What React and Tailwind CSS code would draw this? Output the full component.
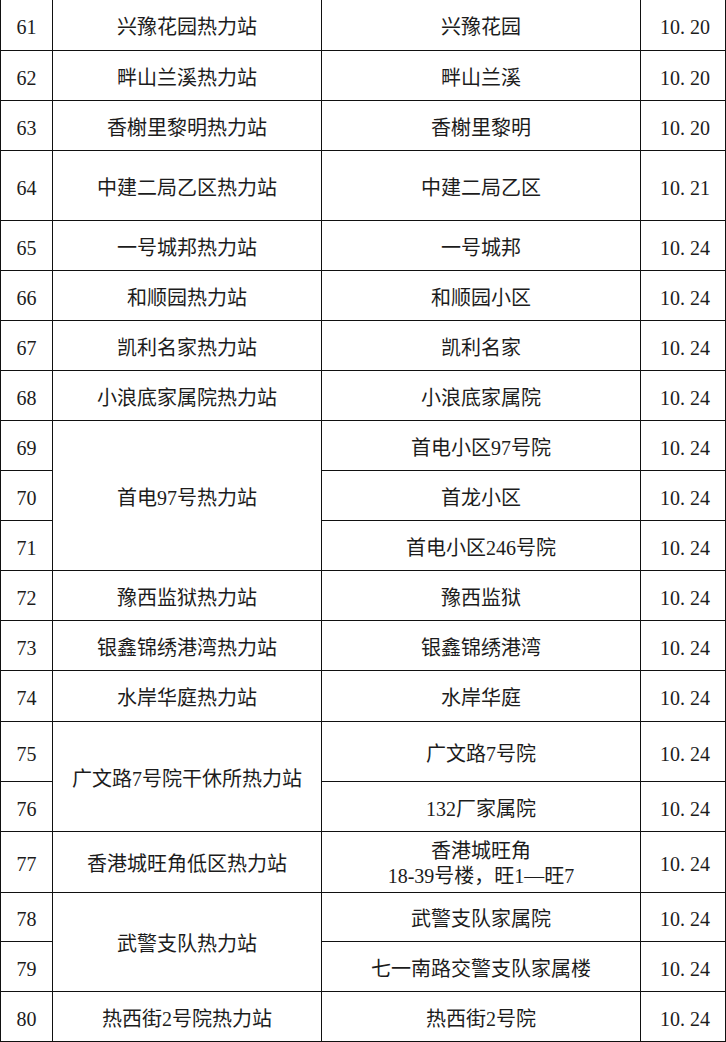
import React from 'react';

// heating stations list, rows 61-80
const rows = [
  { no: 61, station: '兴豫花园热力站', area: '兴豫花园', date: ['10', '20'] },
  { no: 62, station: '畔山兰溪热力站', area: '畔山兰溪', date: ['10', '20'] },
  { no: 63, station: '香榭里黎明热力站', area: '香榭里黎明', date: ['10', '20'] },
  { no: 64, station: '中建二局乙区热力站', area: '中建二局乙区', date: ['10', '21'] },
  { no: 65, station: '一号城邦热力站', area: '一号城邦', date: ['10', '24'] },
  { no: 66, station: '和顺园热力站', area: '和顺园小区', date: ['10', '24'] },
  { no: 67, station: '凯利名家热力站', area: '凯利名家', date: ['10', '24'] },
  { no: 68, station: '小浪底家属院热力站', area: '小浪底家属院', date: ['10', '24'] },
  { no: 69, station: '首电97号热力站', span: 3, area: '首电小区97号院', date: ['10', '24'] },
  { no: 70, area: '首龙小区', date: ['10', '24'] },
  { no: 71, area: '首电小区246号院', date: ['10', '24'] },
  { no: 72, station: '豫西监狱热力站', area: '豫西监狱', date: ['10', '24'] },
  { no: 73, station: '银鑫锦绣港湾热力站', area: '银鑫锦绣港湾', date: ['10', '24'] },
  { no: 74, station: '水岸华庭热力站', area: '水岸华庭', date: ['10', '24'] },
  { no: 75, station: '广文路7号院干休所热力站', span: 2, area: '广文路7号院', date: ['10', '24'] },
  { no: 76, area: '132厂家属院', date: ['10', '24'] },
  { no: 77, station: '香港城旺角低区热力站', area: ['香港城旺角', '18-39号楼，旺1—旺7'], date: ['10', '24'] },
  { no: 78, station: '武警支队热力站', span: 2, area: '武警支队家属院', date: ['10', '24'] },
  { no: 79, area: '七一南路交警支队家属楼', date: ['10', '24'] },
  { no: 80, station: '热西街2号院热力站', area: '热西街2号院', date: ['10', '24'] },
];

const cell = 'bg-white flex items-center justify-center text-center pt-1';

const App = () => {
  return (
    <div
      className="w-[726px] h-[1042px] bg-white text-[#1c1c1c] text-[20px] leading-none"
      style={{ fontFamily: '"Liberation Serif", "Noto Sans CJK SC", serif' }}
    >
      <div className="grid grid-cols-[51px_268px_318px_84px] grid-rows-[50px_49px_49px_69px_49px_49px_49px_49px_49px_49px_49px_49px_49px_50px_59px_49px_60px_48px_49px_49px] gap-px bg-[#111] px-px pb-px">
        {rows.map((r) => (
          <React.Fragment key={r.no}>
            <div className={cell}>{r.no}</div>
            {r.station && (
              <div className={`${cell} ${r.span === 3 ? 'row-span-3' : r.span === 2 ? 'row-span-2' : ''}`}>
                {r.station}
              </div>
            )}
            <div className={`${cell} flex-col`}>
              {Array.isArray(r.area) ? (
                r.area.map((line) => (
                  <span key={line} className="leading-[25px]">{line}</span>
                ))
              ) : (
                r.area
              )}
            </div>
            <div className={`${cell} pl-1`}>
              {r.date[0]}
              <span className="inline-block w-[0.5em] text-left">.</span>
              {r.date[1]}
            </div>
          </React.Fragment>
        ))}
      </div>
    </div>
  );
};

export default App;
